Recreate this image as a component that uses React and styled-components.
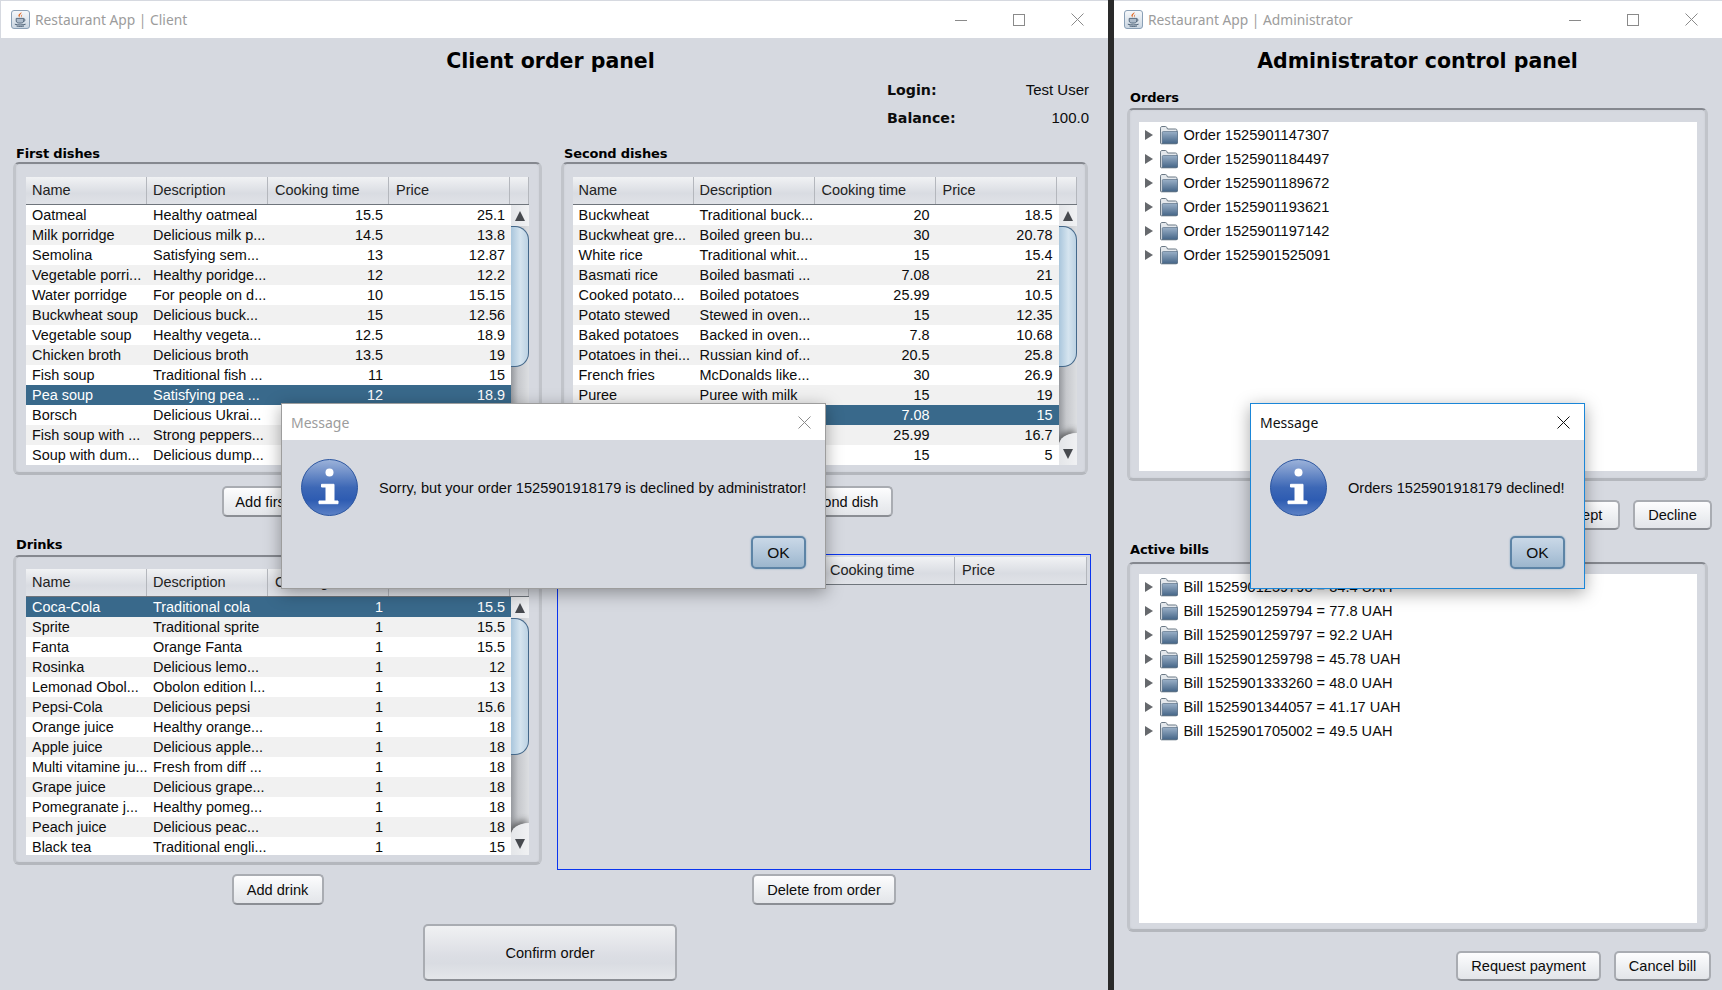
import React from "react";
import styled, { createGlobalStyle } from "styled-components";

const GlobalStyle = createGlobalStyle`
html, body {
  margin: 0;
  padding: 0;
  background: #2b2b2b;
}
* {
  box-sizing: border-box;
}
`;

const BG = "#d6d9e0";

const Desktop = styled.div`
position: relative;
display: flex;
width: 1722px;
height: 990px;
overflow: hidden;
background: #2a2a2a;
font-family: "Liberation Sans", Arial, sans-serif;
font-size: 14.6px;
color: #0c0c0c;
`;

const Win = styled.div`
display: flex;
flex-direction: column;
width: ${(p) => p.$width}px;
margin-left: ${(p) => p.$left || 0}px;
padding: 1px 0 0 ${(p) => (p.$left ? 0 : 1)}px;
background: ${BG};
`;

const TitleBar = styled.div`
display: flex;
align-items: center;
flex: none;
height: 37px;
padding: 0 2px 0 10px;
background: #fff;
`;

const TitleText = styled.div`
margin-left: 5px;
font-family: "Noto Sans", sans-serif;
font-size: 13.8px;
color: ${(p) => (p.$active ? "#111" : "#9c9c9c")};
`;

const Controls = styled.div`
display: flex;
margin-left: auto;
`;

const Control = styled.div`
display: flex;
align-items: center;
justify-content: center;
width: 58px;
height: 37px;
color: #8a8a8a;
`;

const Heading = styled.h1`
margin: 5px 0 0;
height: 37px;
line-height: 37px;
text-align: center;
font-family: "DejaVu Sans", sans-serif;
font-size: 20.5px;
font-weight: bold;
color: #000;
padding-right: ${(p) => p.$shift || 0}px;
`;

const ClientBody = styled.div`
display: flex;
flex-direction: column;
padding: 0 17px 0 12px;
`;

const Account = styled.div`
display: grid;
grid-template-columns: 1fr 90px;
row-gap: 4px;
width: 202px;
margin-top: -2px;
margin-left: 874px;
`;

const AccountLabel = styled.div`
height: 24px;
line-height: 24px;
font-family: "DejaVu Sans", sans-serif;
font-size: 14.2px;
font-weight: bold;
`;

const AccountValue = styled.div`
height: 24px;
line-height: 24px;
text-align: right;
font-size: 15px;
`;

const Columns = styled.div`
display: grid;
grid-template-columns: ${(p) => p.$cols};
column-gap: ${(p) => p.$gap}px;
margin-top: ${(p) => p.$top}px;
`;

const Section = styled.div`
display: flex;
flex-direction: column;
`;

const SectionTitle = styled.div`
height: 16px;
line-height: 16px;
margin-top: ${(p) => p.$top || 0}px;
margin-left: 3px;
margin-bottom: ${(p) => p.$bottom || 0}px;
font-family: "DejaVu Sans", sans-serif;
font-size: 13px;
letter-spacing: -0.15px;
font-weight: bold;
color: #000;
`;

const Frame = styled.div`
display: flex;
justify-content: center;
height: ${(p) => p.$height}px;
margin-top: ${(p) => p.$top || 0}px;
padding-top: ${(p) => p.$pad}px;
padding-bottom: ${(p) => p.$padBottom || 0}px;
border: 3px solid #c1c4ca;
border-top: 2px solid #85888f;
border-bottom: 3px solid #b4b7bd;
border-radius: 6px;
box-shadow: inset 0 0 2px #c8cbd1;
`;

const TableWrap = styled.div`
display: flex;
flex-direction: column;
width: ${(p) => p.$width || 503}px;
height: ${(p) => p.$height}px;
overflow: hidden;
font-size: 14.45px;
`;

const HeaderRow = styled.div`
display: grid;
grid-template-columns: ${(p) => p.$cols};
flex: none;
height: 28px;
background: linear-gradient(#f1f2f4, #d9dce2 60%, #e0e2e7);
border-bottom: 1px solid #6f757c;
font-size: 14.5px;
`;

const HeaderCell = styled.div`
padding-left: ${(p) => (p.$first ? 6 : 7)}px;
line-height: 27px;
color: #222;
border-right: 1px solid #b4b7bd;
white-space: nowrap;
overflow: hidden;
`;

const TableBody = styled.div`
display: flex;
flex: 1;
min-height: 0;
`;

const Rows = styled.div`
flex: 1;
min-width: 0;
background: #fff;
`;

const Row = styled.div`
display: grid;
grid-template-columns: 121px 121px 121px 1fr;
height: 20px;
background: ${(p) => (p.$selected ? "#39698b" : p.$odd ? "#f1f1f1" : "#fff")};
color: ${(p) => (p.$selected ? "#fff" : "#0c0c0c")};
`;

const Cell = styled.div`
padding: ${(p) => (p.$num ? "0 6px 0 0" : "0 0 0 6px")};
line-height: 20px;
white-space: nowrap;
overflow: hidden;
text-align: ${(p) => (p.$num ? "right" : "left")};
`;

const ScrollBar = styled.div`
display: flex;
flex-direction: column;
flex: none;
width: 18px;
overflow: hidden;
background: linear-gradient(90deg, #96999e, #c6c8cc 40%, #dcdee1);
`;

const ScrollEnd = styled.div`
display: flex;
justify-content: center;
align-items: ${(p) => (p.$down ? "flex-end" : "center")};
flex: none;
height: ${(p) => (p.$down ? 32 : 21)}px;
padding-bottom: ${(p) => (p.$down ? 5 : 0)}px;
margin-top: ${(p) => (p.$down ? "auto" : 0)};
border-top-left-radius: ${(p) => (p.$down ? "18px 12px" : 0)};
box-shadow: ${(p) => (p.$down ? "-2px -3px 6px rgba(40, 40, 40, 0.6)" : "none")};
background: linear-gradient(90deg, #e4e6e9, #f0f1f3);
`;

const Thumb = styled.div`
flex: none;
height: ${(p) => p.$height}px;
border: 1px solid #44688a;
border-left: none;
border-radius: 0 14px 14px 0;
background: linear-gradient(90deg, #a9c6dc, #d5e4ef 55%, #bcd2e3);
`;

const TreeFrame = styled.div`
flex: none;
width: 558px;
padding-top: 1px;
padding-left: 6px;
background: #fff;
`;

const TreeRow = styled.div`
display: flex;
align-items: center;
height: 24px;
`;

const TreeLabel = styled.span`
margin-left: 5px;
white-space: nowrap;
`;

const ButtonRow = styled.div`
display: flex;
justify-content: ${(p) => p.$justify || "center"};
gap: 13px;
margin-top: ${(p) => p.$top}px;
margin-right: ${(p) => p.$overhang || 0}px;
padding-right: ${(p) => p.$right || 0}px;
`;

const Btn = styled.div`
display: flex;
align-items: center;
justify-content: center;
flex: none;
width: ${(p) => p.$width}px;
height: ${(p) => p.$height || 31}px;
border: 2px solid #a9acb2;
border-bottom-color: #8b8e94;
border-radius: 5px;
background: ${(p) =>
  p.$big
    ? "linear-gradient(#f0f1f3, #dcdee4 55%, #d9dce2 70%, #e4e6ea)"
    : "linear-gradient(#fdfdfe, #eceef1 60%, #e3e5e9)"};
white-space: nowrap;
`;

const OrderBox = styled.div`
display: flex;
flex-direction: column;
height: 316px;
margin-top: 17px;
padding: 2px 3px 0 1px;
border: 1px solid #0a35f0;
`;

const AdminBody = styled.div`
display: flex;
flex-direction: column;
padding: 0 14px 0 13px;
`;

const Dialog = styled.div`
position: absolute;
left: ${(p) => p.$x}px;
top: ${(p) => p.$y}px;
display: flex;
flex-direction: column;
width: ${(p) => p.$w}px;
height: ${(p) => p.$h}px;
background: ${BG};
border: 1px solid ${(p) => (p.$active ? "#1a86d8" : "#9d9d9d")};
box-shadow: 0 4px 16px rgba(0, 0, 0, 0.35);
`;

const DialogTitle = styled.div`
display: flex;
align-items: center;
justify-content: space-between;
flex: none;
height: 36px;
padding: 0 14px 0 9px;
background: #fff;
font-family: "Noto Sans", sans-serif;
font-size: 14px;
color: ${(p) => (p.$active ? "#111" : "#9c9c9c")};
`;

const DialogClose = styled.span`
display: flex;
color: ${(p) => (p.$active ? "#111" : "#8a8a8a")};
`;

const DialogMain = styled.div`
display: flex;
align-items: center;
gap: 21px;
padding: 19px 0 0 19px;
`;

const DialogActions = styled.div`
display: flex;
justify-content: flex-end;
margin-top: auto;
padding: 0 19px 19px 0;
`;

const OkButton = styled.div`
display: flex;
align-items: center;
justify-content: center;
width: 55px;
height: 33px;
border: 2px solid #5d84a6;
border-radius: 5px;
background: linear-gradient(#c9d8e7, #b1c6da 55%, #9cb6cd);
box-shadow: 0 0 2px #87a6c2;
font-size: 15.5px;
`;

function JavaIcon() {
  return (
    <svg width="19" height="19" viewBox="0 0 19 19">
      <defs>
        <linearGradient id="jbg" x1="0" y1="0" x2="0" y2="1">
          <stop offset="0" stopColor="#f7f9fb" />
          <stop offset="1" stopColor="#c9d5e1" />
        </linearGradient>
      </defs>
      <rect x="0.5" y="0.5" width="18" height="18" rx="2.5" fill="url(#jbg)" stroke="#8aa0b6" />
      <path d="M10.2 2c1.2 1.8-2.6 2.6-1.4 5.4-2.4-1.4-1.2-3.4.2-4 .6-.3 1-.8 1.2-1.4zM11.8 4.4c-1.2.8-1.6 1.6-.9 3-.9-.5-1.4-1.6-.5-2.4.4-.3.9-.5 1.4-.6z" fill="#e0641e" />
      <path d="M5.2 8.4h7.6v2.6c0 1.4-1.3 2.1-3.8 2.1s-3.8-.7-3.8-2.1z" fill="#aebccb" stroke="#4c6176" strokeWidth="0.9" />
      <path d="M12.8 9.2c1.8-.3 1.9 1.7-.4 2.2" fill="none" stroke="#4c6176" strokeWidth="0.9" />
      <path d="M3.8 14.2c2.8 1 8 1 10.8 0M5.5 16c2 .5 5.5.5 7.5 0" fill="none" stroke="#4c6176" strokeWidth="1" />
    </svg>
  );
}

function InfoIcon() {
  return (
    <svg width="57" height="57" viewBox="0 0 57 57">
      <defs>
        <linearGradient id="infoFill" x1="0" y1="0" x2="0" y2="1">
          <stop offset="0" stopColor="#9db3da" />
          <stop offset="0.5" stopColor="#3d68b6" />
          <stop offset="0.72" stopColor="#2e5cb2" />
          <stop offset="1" stopColor="#5d82c6" />
        </linearGradient>
      </defs>
      <circle cx="28.5" cy="28.5" r="28" fill="url(#infoFill)" stroke="#2c56a0" strokeWidth="1" />
      <circle cx="28.5" cy="13.5" r="4" fill="#fff" />
      <path d="M20.5 25.3h12.5v16.7h4v2.7h-19v-2.7h7v-14h-4.5z" fill="#fff" stroke="#fff" strokeLinejoin="round" />
    </svg>
  );
}

function FolderIcon() {
  return (
    <svg width="20" height="20" viewBox="0 0 20 20">
      <defs>
        <linearGradient id="folderFill" x1="0" y1="0" x2="0" y2="1">
          <stop offset="0" stopColor="#9ab0c7" />
          <stop offset="1" stopColor="#466688" />
        </linearGradient>
      </defs>
      <path d="M1.5 18V3.2c0-1 .6-1.7 1.5-1.7h3.5c.7 0 1 .4 1.3 1l.7 1.5h8c.9 0 1.5.6 1.5 1.5V18c0 .5-.3.8-.8.8H2.3c-.5 0-.8-.3-.8-.8z" fill="#e4e8ec" stroke="#6a7885" />
      <path d="M3.2 7.5c0-.6.4-1 1-1h14.3V18c0 .4-.2.5-.5.5H3.2z" fill="url(#folderFill)" stroke="#4d647c" strokeWidth="0.6" />
    </svg>
  );
}

function Arrow({ down }) {
  return (
    <svg width="10" height="12" viewBox="0 0 10 12">
      <path d={down ? "M0 1h10L5 11z" : "M5 1l5 10H0z"} fill="#474a4f" />
    </svg>
  );
}

const ExpanderIcon = styled.svg`
flex: none;
margin-right: 6px;
`;

function Expander() {
  return (
    <ExpanderIcon width="8" height="10" viewBox="0 0 8 10">
      <path d="M0 0l8 5-8 5z" fill="#66696d" />
    </ExpanderIcon>
  );
}

function CloseGlyph() {
  return (
    <svg width="13" height="13" viewBox="0 0 13 13">
      <path d="M.5.5l12 12M12.5.5l-12 12" stroke="currentColor" fill="none" />
    </svg>
  );
}

function WinControls() {
  return (
    <Controls>
      <Control>
        <svg width="12" height="12" viewBox="0 0 12 12">
          <path d="M0 6.5h12" stroke="currentColor" fill="none" />
        </svg>
      </Control>
      <Control>
        <svg width="12" height="12" viewBox="0 0 12 12">
          <rect x="0.5" y="0.5" width="11" height="11" stroke="currentColor" fill="none" />
        </svg>
      </Control>
      <Control>
        <CloseGlyph />
      </Control>
    </Controls>
  );
}

const COLS = ["Name", "Description", "Cooking time", "Price"];

const firstDishes = [
  ["Oatmeal", "Healthy oatmeal", "15.5", "25.1"],
  ["Milk porridge", "Delicious milk p...", "14.5", "13.8"],
  ["Semolina", "Satisfying sem...", "13", "12.87"],
  ["Vegetable porri...", "Healthy poridge...", "12", "12.2"],
  ["Water porridge", "For people on d...", "10", "15.15"],
  ["Buckwheat soup", "Delicious buck...", "15", "12.56"],
  ["Vegetable soup", "Healthy vegeta...", "12.5", "18.9"],
  ["Chicken broth", "Delicious broth", "13.5", "19"],
  ["Fish soup", "Traditional fish ...", "11", "15"],
  ["Pea soup", "Satisfying pea ...", "12", "18.9"],
  ["Borsch", "Delicious Ukrai...", "", ""],
  ["Fish soup with ...", "Strong peppers...", "", ""],
  ["Soup with dum...", "Delicious dump...", "", ""],
];

const secondDishes = [
  ["Buckwheat", "Traditional buck...", "20", "18.5"],
  ["Buckwheat gre...", "Boiled green bu...", "30", "20.78"],
  ["White rice", "Traditional whit...", "15", "15.4"],
  ["Basmati rice", "Boiled basmati ...", "7.08", "21"],
  ["Cooked potato...", "Boiled potatoes", "25.99", "10.5"],
  ["Potato stewed", "Stewed in oven...", "15", "12.35"],
  ["Baked potatoes", "Backed in oven...", "7.8", "10.68"],
  ["Potatoes in thei...", "Russian kind of...", "20.5", "25.8"],
  ["French fries", "McDonalds like...", "30", "26.9"],
  ["Puree", "Puree with milk", "15", "19"],
  ["", "", "7.08", "15"],
  ["", "", "25.99", "16.7"],
  ["", "", "15", "5"],
];

const drinks = [
  ["Coca-Cola", "Traditional cola", "1", "15.5"],
  ["Sprite", "Traditional sprite", "1", "15.5"],
  ["Fanta", "Orange Fanta", "1", "15.5"],
  ["Rosinka", "Delicious lemo...", "1", "12"],
  ["Lemonad Obol...", "Obolon edition l...", "1", "13"],
  ["Pepsi-Cola", "Delicious pepsi", "1", "15.6"],
  ["Orange juice", "Healthy orange...", "1", "18"],
  ["Apple juice", "Delicious apple...", "1", "18"],
  ["Multi vitamine ju...", "Fresh from diff ...", "1", "18"],
  ["Grape juice", "Delicious grape...", "1", "18"],
  ["Pomegranate j...", "Healthy pomeg...", "1", "18"],
  ["Peach juice", "Delicious peac...", "1", "18"],
  ["Black tea", "Traditional engli...", "1", "15"],
];

const orders = ["1525901147307", "1525901184497", "1525901189672", "1525901193621", "1525901197142", "1525901525091"];

const bills = [
  "1525901259793 = 34.4 UAH",
  "1525901259794 = 77.8 UAH",
  "1525901259797 = 92.2 UAH",
  "1525901259798 = 45.78 UAH",
  "1525901333260 = 48.0 UAH",
  "1525901344057 = 41.17 UAH",
  "1525901705002 = 49.5 UAH",
];

function DishTable({ rows, selected, height, width, thumb }) {
  return (
    <TableWrap $height={height} $width={width}>
      <HeaderRow $cols="repeat(4, 121px) 1fr">
        {COLS.map((c, i) => (
          <HeaderCell key={c} $first={i < 2}>{c}</HeaderCell>
        ))}
        <HeaderCell />
      </HeaderRow>
      <TableBody>
        <Rows>
          {rows.map((r, i) => (
            <Row key={i} $odd={i % 2 === 1} $selected={i === selected}>
              <Cell>{r[0]}</Cell>
              <Cell>{r[1]}</Cell>
              <Cell $num>{r[2]}</Cell>
              <Cell $num>{r[3]}</Cell>
            </Row>
          ))}
        </Rows>
        <ScrollBar>
          <ScrollEnd><Arrow /></ScrollEnd>
          <Thumb $height={thumb} />
          <ScrollEnd $down><Arrow down /></ScrollEnd>
        </ScrollBar>
      </TableBody>
    </TableWrap>
  );
}

function MessageDialog({ x, y, w, h, active, text }) {
  return (
    <Dialog $x={x} $y={y} $w={w} $h={h} $active={active}>
      <DialogTitle $active={active}>
        Message
        <DialogClose $active={active}>
          <CloseGlyph />
        </DialogClose>
      </DialogTitle>
      <DialogMain>
        <InfoIcon />
        <span>{text}</span>
      </DialogMain>
      <DialogActions>
        <OkButton>OK</OkButton>
      </DialogActions>
    </Dialog>
  );
}

function App() {
  return (
    <Desktop>
      <GlobalStyle />
      <Win $width={1108}>
        <TitleBar>
          <JavaIcon />
          <TitleText>Restaurant App | Client</TitleText>
          <WinControls />
        </TitleBar>
        <ClientBody>
          <Heading $shift={3}>Client order panel</Heading>
          <Account>
            <AccountLabel>Login:</AccountLabel>
            <AccountValue>Test User</AccountValue>
            <AccountLabel>Balance:</AccountLabel>
            <AccountValue>100.0</AccountValue>
          </Account>
          <Columns $cols="529px 527px" $gap={19} $top={16}>
            <Section>
              <SectionTitle>First dishes</SectionTitle>
              <Frame $height={313} $pad={13}>
                <DishTable rows={firstDishes} selected={9} height={288} thumb={141} />
              </Frame>
              <ButtonRow $top={11}>
                <Btn $width={112}>Add first dish</Btn>
              </ButtonRow>
            </Section>
            <Section>
              <SectionTitle>Second dishes</SectionTitle>
              <Frame $height={313} $pad={13}>
                <DishTable rows={secondDishes} selected={10} height={288} width={504} thumb={141} />
              </Frame>
              <ButtonRow $top={11}>
                <Btn $width={136}>Add second dish</Btn>
              </ButtonRow>
            </Section>
          </Columns>
          <Columns $cols="529px 534px" $gap={15} $top={20}>
            <Section>
              <SectionTitle>Drinks</SectionTitle>
              <Frame $height={310} $top={2} $pad={12}>
                <DishTable rows={drinks} selected={0} height={286} thumb={137} />
              </Frame>
              <ButtonRow $top={9}>
                <Btn $width={92}>Add drink</Btn>
              </ButtonRow>
            </Section>
            <Section>
              <OrderBox>
                <HeaderRow $cols="repeat(4, 1fr)">
                  {COLS.map((c, i) => (
                    <HeaderCell key={c} $first={i < 2}>{c}</HeaderCell>
                  ))}
                </HeaderRow>
              </OrderBox>
              <ButtonRow $top={4}>
                <Btn $width={144}>Delete from order</Btn>
              </ButtonRow>
            </Section>
          </Columns>
          <ButtonRow $top={19} $right={4}>
            <Btn $big $width={254} $height={57}>Confirm order</Btn>
          </ButtonRow>
        </ClientBody>
      </Win>
      <Win $width={608} $left={6}>
        <TitleBar>
          <JavaIcon />
          <TitleText>Restaurant App | Administrator</TitleText>
          <WinControls />
        </TitleBar>
        <AdminBody>
          <Heading>Administrator control panel</Heading>
          <SectionTitle $top={10} $bottom={2}>Orders</SectionTitle>
          <Frame $height={373} $pad={12} $padBottom={7}>
            <TreeFrame>
              {orders.map((o) => (
                <TreeRow key={o}>
                  <Expander />
                  <FolderIcon />
                  <TreeLabel>Order {o}</TreeLabel>
                </TreeRow>
              ))}
            </TreeFrame>
          </Frame>
          <ButtonRow $top={19} $justify="flex-end" $overhang={-4}>
            <Btn $width={80} $height={30}>Accept</Btn>
            <Btn $width={79} $height={30}>Decline</Btn>
          </ButtonRow>
          <SectionTitle $top={12} $bottom={4}>Active bills</SectionTitle>
          <Frame $height={370} $pad={10} $padBottom={6}>
            <TreeFrame>
              {bills.map((b) => (
                <TreeRow key={b}>
                  <Expander />
                  <FolderIcon />
                  <TreeLabel>Bill {b}</TreeLabel>
                </TreeRow>
              ))}
            </TreeFrame>
          </Frame>
          <ButtonRow $top={19} $justify="flex-end" $overhang={-3}>
            <Btn $width={145} $height={30}>Request payment</Btn>
            <Btn $width={97} $height={30}>Cancel bill</Btn>
          </ButtonRow>
        </AdminBody>
      </Win>
      <MessageDialog x={281} y={403} w={545} h={186} text="Sorry, but your order 1525901918179 is declined by administrator!" />
      <MessageDialog x={1250} y={403} w={335} h={186} active text="Orders 1525901918179 declined!" />
    </Desktop>
  );
}

export default App;
